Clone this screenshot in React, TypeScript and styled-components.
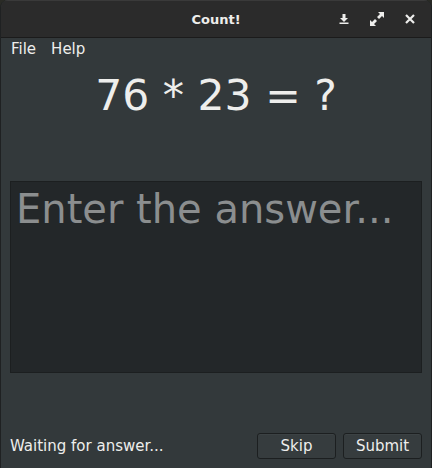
import React from "react";
import styled, { createGlobalStyle } from "styled-components";

const Global = createGlobalStyle`
  html, body { margin: 0; padding: 0; background: #2a2b26; }
  body { font-family: "DejaVu Sans", "Liberation Sans", sans-serif; }
  * { box-sizing: border-box; }
`;

const Window = styled.div`
  width: 432px;
  height: 468px;
  display: flex;
  flex-direction: column;
  background: #33393b;
  border-left: 1px solid #1f2122;
  border-right: 1px solid #1f2122;
  border-radius: 8px 8px 0 0;
  overflow: hidden;
  color: #eeeeec;
`;

const TitleBar = styled.div`
  height: 38px;
  flex: none;
  display: flex;
  align-items: center;
  position: relative;
  background: #2b2b2b;
  border-bottom: 1px solid #1b1b1b;
  border-top: 1px solid #3a3a3a;
`;

const Title = styled.div`
  position: absolute;
  left: 0;
  right: 0;
  text-align: center;
  font-weight: bold;
  font-size: 13px;
  color: #eeeeec;
`;

const TitleButtons = styled.div`
  margin-left: auto;
  display: flex;
  align-items: center;
  gap: 17px;
  padding-right: 13px;
  position: relative;
`;

const TitleButton = styled.div`
  width: 16px;
  height: 16px;
  display: flex;
  align-items: center;
  justify-content: center;
`;

const MenuBar = styled.div`
  height: 22px;
  flex: none;
  display: flex;
  align-items: center;
  gap: 15px;
  padding-left: 10px;
  font-size: 15px;
`;

const Equation = styled.div`
  flex: none;
  height: 70px;
  display: flex;
  align-items: center;
  justify-content: center;
  font-size: 42.5px;
`;

const AnswerField = styled.div`
  flex: none;
  margin: 51px 9px 0 9px;
  height: 192px;
  background: #232729;
  border: 1px solid #1c1f20;
  padding: 7px 5px;
  font-size: 40px;
  color: #8b8e8f;
  line-height: 1;
`;

const StatusRow = styled.div`
  margin-top: auto;
  display: flex;
  align-items: center;
  padding: 0 9px 9px 9px;
  font-size: 15px;
`;

const Status = styled.div`
  flex: 1;
`;

const Button = styled.div<{ $gap?: number }>`
  width: 79px;
  height: 26px;
  display: flex;
  align-items: center;
  justify-content: center;
  background: #363c3e;
  border: 1px solid #1c1f20;
  border-radius: 3px;
  box-shadow: inset 0 1px rgba(255, 255, 255, 0.03);
  font-size: 15px;
  margin-left: ${(p) => p.$gap ?? 0}px;
`;

export default function App() {
  return (
    <>
      <Global />
      <Window>
        <TitleBar>
          <Title>Count!</Title>
          <TitleButtons>
            <TitleButton>
              <svg width="10" height="10" viewBox="0 0 10 10">
                <path d="M3.5 0h3v4h2.5l-4 4-4-4h2.5z" fill="#eeeeec" />
                <rect x="0.5" y="8.5" width="9" height="1.5" fill="#eeeeec" />
              </svg>
            </TitleButton>
            <TitleButton>
              <svg width="14" height="14" viewBox="0 0 14 14">
                <path d="M8 0h6v6l-2-2-3 3-2-2 3-3z" fill="#eeeeec" />
                <path d="M6 14H0V8l2 2 3-3 2 2-3 3z" fill="#eeeeec" />
              </svg>
            </TitleButton>
            <TitleButton>
              <svg width="10" height="10" viewBox="0 0 10 10">
                <path d="M1 1l8 8M9 1l-8 8" stroke="#eeeeec" strokeWidth="2.2" />
              </svg>
            </TitleButton>
          </TitleButtons>
        </TitleBar>
        <MenuBar>
          <span>File</span>
          <span>Help</span>
        </MenuBar>
        <Equation>76 * 23 = ?</Equation>
        <AnswerField>Enter the answer...</AnswerField>
        <StatusRow>
          <Status>Waiting for answer...</Status>
          <Button>Skip</Button>
          <Button $gap={7}>Submit</Button>
        </StatusRow>
      </Window>
    </>
  );
}
